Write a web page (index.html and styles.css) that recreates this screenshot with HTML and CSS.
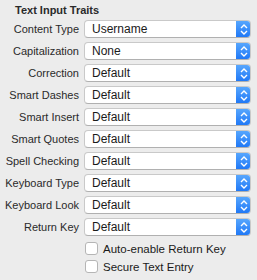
FILE: index.html
```html
<!DOCTYPE html>
<html>
<head>
<meta charset="utf-8">
<link rel="stylesheet" href="styles.css">
</head>
<body>
<div class="panel">
  <div class="title">Text Input Traits</div>
  <div class="grid">
    <div class="label">Content Type</div>
    <div class="popup"><span class="value">Username</span><span class="arrows"><svg width="8" height="11" viewBox="0 0 8 11"><path d="M1 4 L4 1 L7 4 M1 7 L4 10 L7 7" fill="none" stroke="#fff" stroke-width="1.4"/></svg></span></div>
    <div class="label">Capitalization</div>
    <div class="popup"><span class="value">None</span><span class="arrows"><svg width="8" height="11" viewBox="0 0 8 11"><path d="M1 4 L4 1 L7 4 M1 7 L4 10 L7 7" fill="none" stroke="#fff" stroke-width="1.4"/></svg></span></div>
    <div class="label">Correction</div>
    <div class="popup"><span class="value">Default</span><span class="arrows"><svg width="8" height="11" viewBox="0 0 8 11"><path d="M1 4 L4 1 L7 4 M1 7 L4 10 L7 7" fill="none" stroke="#fff" stroke-width="1.4"/></svg></span></div>
    <div class="label">Smart Dashes</div>
    <div class="popup"><span class="value">Default</span><span class="arrows"><svg width="8" height="11" viewBox="0 0 8 11"><path d="M1 4 L4 1 L7 4 M1 7 L4 10 L7 7" fill="none" stroke="#fff" stroke-width="1.4"/></svg></span></div>
    <div class="label">Smart Insert</div>
    <div class="popup"><span class="value">Default</span><span class="arrows"><svg width="8" height="11" viewBox="0 0 8 11"><path d="M1 4 L4 1 L7 4 M1 7 L4 10 L7 7" fill="none" stroke="#fff" stroke-width="1.4"/></svg></span></div>
    <div class="label">Smart Quotes</div>
    <div class="popup"><span class="value">Default</span><span class="arrows"><svg width="8" height="11" viewBox="0 0 8 11"><path d="M1 4 L4 1 L7 4 M1 7 L4 10 L7 7" fill="none" stroke="#fff" stroke-width="1.4"/></svg></span></div>
    <div class="label">Spell Checking</div>
    <div class="popup"><span class="value">Default</span><span class="arrows"><svg width="8" height="11" viewBox="0 0 8 11"><path d="M1 4 L4 1 L7 4 M1 7 L4 10 L7 7" fill="none" stroke="#fff" stroke-width="1.4"/></svg></span></div>
    <div class="label">Keyboard Type</div>
    <div class="popup"><span class="value">Default</span><span class="arrows"><svg width="8" height="11" viewBox="0 0 8 11"><path d="M1 4 L4 1 L7 4 M1 7 L4 10 L7 7" fill="none" stroke="#fff" stroke-width="1.4"/></svg></span></div>
    <div class="label">Keyboard Look</div>
    <div class="popup"><span class="value">Default</span><span class="arrows"><svg width="8" height="11" viewBox="0 0 8 11"><path d="M1 4 L4 1 L7 4 M1 7 L4 10 L7 7" fill="none" stroke="#fff" stroke-width="1.4"/></svg></span></div>
    <div class="label">Return Key</div>
    <div class="popup"><span class="value">Default</span><span class="arrows"><svg width="8" height="11" viewBox="0 0 8 11"><path d="M1 4 L4 1 L7 4 M1 7 L4 10 L7 7" fill="none" stroke="#fff" stroke-width="1.4"/></svg></span></div>
  </div>
  <div class="checks">
    <div class="check"><span class="box"></span><span>Auto-enable Return Key</span></div>
    <div class="check"><span class="box"></span><span>Secure Text Entry</span></div>
  </div>
</div>
</body>
</html>
```
FILE: styles.css
```css
html, body {
  margin: 0;
  padding: 0;
  background: #ececec;
}
body {
  font-family: "Liberation Sans", Arial, sans-serif;
  font-size: 11px;
  color: #2a2a2a;
}
.panel {
  width: 257px;
  height: 280px;
  box-sizing: border-box;
  padding: 3px 6px 0 0;
}
.title {
  font-weight: bold;
  font-size: 11px;
  padding-left: 15px;
  height: 17px;
  line-height: 14px;
}
.grid {
  display: grid;
  grid-template-columns: 79px 1fr;
  column-gap: 5px;
  row-gap: 4px;
  align-items: center;
}
.label {
  text-align: right;
  line-height: 18px;
}
.popup {
  display: flex;
  height: 18px;
  box-sizing: border-box;
  background: #fff;
  border: 1px solid #c9c9c9;
  border-bottom-color: #b0b0b0;
  border-radius: 4px;
  overflow: hidden;
}
.value {
  flex: 1;
  padding-left: 7px;
  line-height: 16px;
  font-size: 12px;
  color: #1a1a1a;
}
.arrows {
  width: 15px;
  margin: -1px -1px -1px 0;
  background: linear-gradient(#5aa9fe, #1d76f6);
  border-radius: 0 4px 4px 0;
  display: flex;
  align-items: center;
  justify-content: center;
}
.checks {
  padding-left: 85px;
  padding-top: 6px;
  display: flex;
  flex-direction: column;
  gap: 5px;
}
.check {
  display: flex;
  align-items: center;
  gap: 5px;
  height: 13px;
  font-size: 11.5px;
  color: #1a1a1a;
}
.box {
  width: 11px;
  height: 11px;
  border: 1px solid #b5b5b5;
  border-radius: 3px;
  background: #fff;
}
```
